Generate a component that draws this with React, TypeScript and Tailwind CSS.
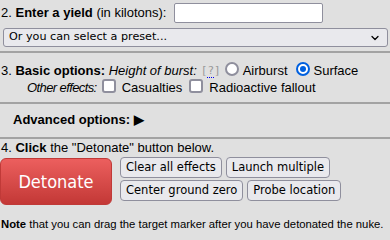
import { ChevronDown } from 'lucide-react'

function Radio({ checked }: { checked?: boolean }) {
  return checked ? (
    <span className="inline-block w-[14px] h-[14px] rounded-full border-[2px] border-[#0060df] bg-white relative shrink-0">
      <span className="absolute inset-[2px] rounded-full bg-[#0060df]" />
    </span>
  ) : (
    <span className="inline-block w-[14px] h-[14px] rounded-full border-[2px] border-[#8f8f9d] bg-white shrink-0" />
  )
}

function Check() {
  return <span className="inline-block w-[14px] h-[14px] rounded-[3px] border-[2px] border-[#8f8f9d] bg-white shrink-0" />
}

function SmallBtn({ children }: { children: string }) {
  return (
    <button className="h-[21px] px-[5px] rounded-[4px] border border-[#8f8f9d] bg-[#e9e9ed] text-[11.5px] leading-none text-black font-['DejaVu_Sans',Verdana,sans-serif]">
      {children}
    </button>
  )
}

export default function App() {
  return (
    <div className="w-[390px] h-[240px] overflow-hidden bg-[#e0e0e0] text-black text-[13px] font-['Liberation_Sans',Arial,sans-serif]">
      {/* 2. yield */}
      <div className="pb-[4px] border-b-2 border-[#a3a3a3]">
        <div className="h-[26px] flex items-center pl-[1px]">
          <span>
            2. <b>Enter a yield</b> (in kilotons):
          </span>
          <input
            type="text"
            className="ml-[8px] w-[149px] h-[20px] bg-white border border-[#8f8f9d] rounded-[2px] outline-none"
          />
        </div>
        <div className="mt-[2px] ml-[3px] mr-[2px] h-[19px] flex items-center justify-between pl-[5px] pr-[6px] bg-[#e9e9ed] border border-[#8f8f9d] rounded-[3px] text-[11.2px] font-['DejaVu_Sans',Verdana,sans-serif]">
          <span>Or you can select a preset...</span>
          <ChevronDown size={12} strokeWidth={2.5} />
        </div>
      </div>

      {/* 3. basic options */}
      <div className="pt-[9px] pb-[6px] pl-[1px] border-b-2 border-[#a3a3a3] leading-[17px]">
        <div className="flex items-center h-[17px]">
          <span>
            3. <b>Basic options:</b> <i>Height of burst:</i>
          </span>
          <span className="ml-[4px] text-[11px] text-[#999] font-['DejaVu_Sans_Mono',monospace]">
            [<span className="border-b border-dotted border-[#0000ee]">?</span>]
          </span>
          <span className="ml-[4px]"><Radio /></span>
          <span className="ml-[4px]">Airburst</span>
          <span className="ml-[8px]"><Radio checked /></span>
          <span className="ml-[4px]">Surface</span>
        </div>
        <div className="flex items-center h-[17px] pl-[26px]">
          <i className="tracking-[-0.6px]">Other effects:</i>
          <span className="ml-[5px]"><Check /></span>
          <span className="ml-[6px]">Casualties</span>
          <span className="ml-[7px]"><Check /></span>
          <span className="ml-[6px]">Radioactive fallout</span>
        </div>
      </div>

      {/* advanced */}
      <div className="pt-[7px] pb-[9px] pl-[13px] border-b-2 border-[#a3a3a3] leading-[17px]">
        <b>Advanced options: ▶</b>
      </div>

      {/* 4. detonate */}
      <div className="pl-[1px] leading-[15px]">
        <div className="mt-[1px]">
          4. <b>Click</b> the "Detonate" button below.
        </div>
        <div className="flex gap-[8px] mt-[2px]">
          <button className="mt-[1px] -ml-[1px] w-[112px] h-[47px] rounded-[6px] border border-[#c03a38] bg-gradient-to-b from-[#ec5f5e] to-[#c33836] text-white text-[18px] font-['DejaVu_Sans_Condensed','DejaVu_Sans',sans-serif]">
            Detonate
          </button>
          <div className="flex flex-col gap-[2px]">
            <div className="flex gap-[4px]">
              <SmallBtn>Clear all effects</SmallBtn>
              <SmallBtn>Launch multiple</SmallBtn>
            </div>
            <div className="flex gap-[4px]">
              <SmallBtn>Center ground zero</SmallBtn>
              <SmallBtn>Probe location</SmallBtn>
            </div>
          </div>
        </div>
        <div className="mt-[12px] text-[11.3px]">
          <b>Note</b> that you can drag the target marker after you have detonated the nuke.
        </div>
      </div>
    </div>
  )
}
